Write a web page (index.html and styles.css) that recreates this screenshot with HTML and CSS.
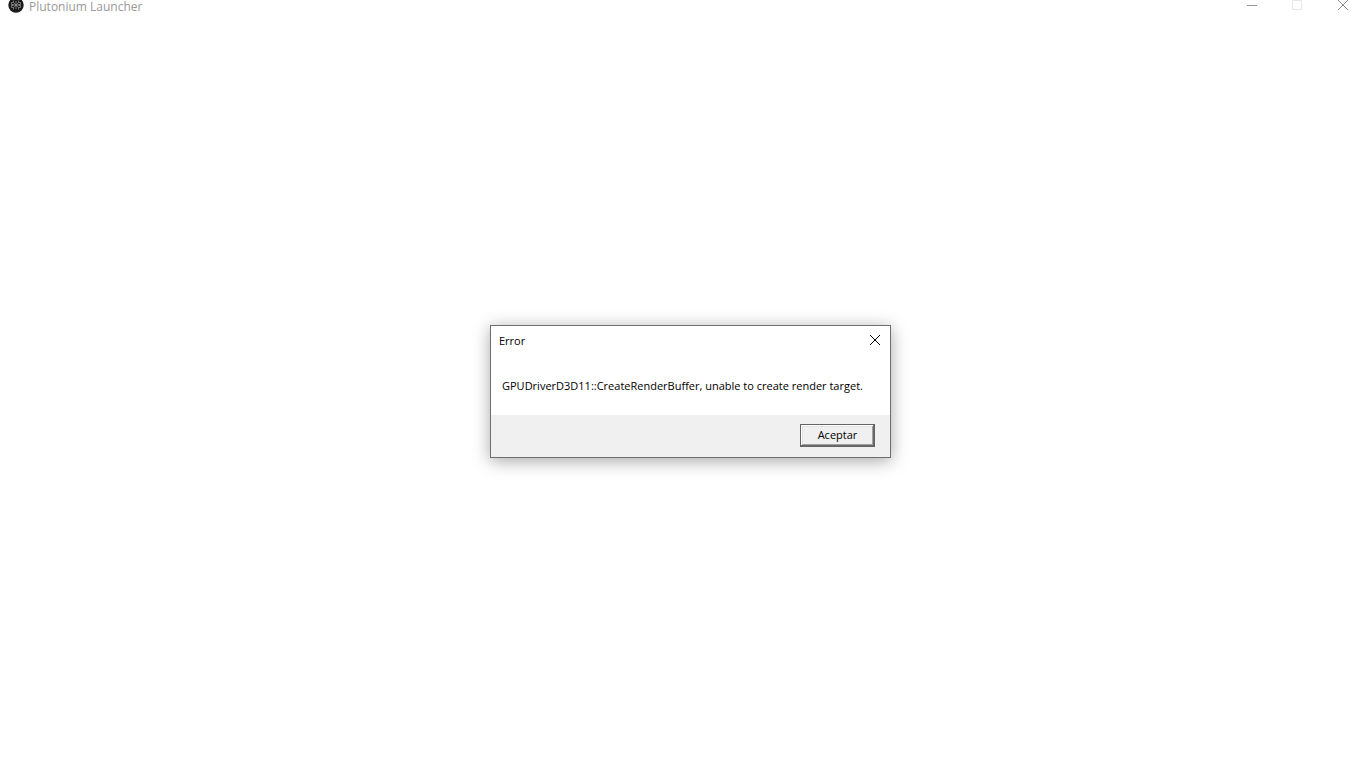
FILE: index.html
```html
<!DOCTYPE html>
<html lang="es">
<head>
    <meta charset="UTF-8">
    <meta name="viewport" content="width=device-width, initial-scale=1.0">
    <title>Plutonium Launcher</title>
    <link rel="stylesheet" href="styles.css">
</head>
<body>
    <header class="titlebar">
        <svg class="app-icon" width="16" height="16" viewBox="0 0 16 16">
            <circle cx="8" cy="8" r="7.7" fill="#1a1a1a"/>
            <g fill="none" stroke="#8c8c8c" stroke-width="0.8">
                <path d="M8 4v8M3.500 8h9"/>
                <path d="M5.5 3.5v2H3.500v2h2M10.5 3.5v2h2v2h-2M5.5 12.500v-2h-2v-2h2M10.5 12.500v-2h2v-2h-2"/>
                <path d="M5.5 5.5l5 5M10.5 5.5l-5 5"/>
            </g>
        </svg>
        <span class="app-title">Plutonium Launcher</span>
        <div class="window-controls">
            <button type="button" aria-label="Minimizar">
                <svg width="10" height="10" viewBox="0 0 10 10"><path d="M0 5.5h10" stroke="#999"/></svg>
            </button>
            <button type="button" aria-label="Maximizar" disabled>
                <svg width="10" height="10" viewBox="0 0 10 10"><path d="M.5 .5h9v9h-9z" fill="none" stroke="#e6e6e6"/></svg>
            </button>
            <button type="button" class="close" aria-label="Cerrar">
                <svg width="10" height="10" viewBox="0 0 10 10"><path d="M0 0l10 10M10 0L0 10" stroke="#8c8c8c"/></svg>
            </button>
        </div>
    </header>

    <main class="desktop">
        <section class="dialog" role="alertdialog" aria-labelledby="dialog-title" aria-describedby="dialog-text">
            <div class="dialog-header">
                <span id="dialog-title">Error</span>
                <button type="button" class="dialog-close" aria-label="Cerrar" onclick="closeDialog()">
                    <svg width="10" height="10" viewBox="0 0 10 10"><path d="M0 0l10 10M10 0L0 10" stroke="#000"/></svg>
                </button>
            </div>
            <p id="dialog-text" class="dialog-text">GPUDriverD3D11::CreateRenderBuffer, unable to create render target.</p>
            <div class="dialog-footer">
                <button type="button" class="accept" onclick="closeDialog()">Aceptar</button>
            </div>
        </section>
    </main>

    <script>
        function closeDialog() {
            document.querySelector(".dialog").hidden = true;
        }
    </script>
</body>
</html>
```
FILE: styles.css
```css
* {
    box-sizing: border-box;
}

body {
    margin: 0;
    min-height: 100vh;
    display: flex;
    flex-direction: column;
    background-color: #fff;
    color: #000;
    font-family: "Open Sans", "Noto Sans", sans-serif;
    font-size: 11px;
    line-height: 16px;
}

button {
    font: inherit;
    color: inherit;
    border: none;
    background: none;
    padding: 0;
}

/* Window title bar */
.titlebar {
    height: 10px;
    display: flex;
    align-items: center;
    padding-left: 8px;
}

.app-icon {
    flex: none;
}

.app-title {
    margin-left: 5px;
    padding-top: 3px;
    font-size: 12px;
    line-height: 12px;
    color: #999;
}

.window-controls {
    display: flex;
    margin-left: auto;
}

.window-controls button {
    width: 45px;
    height: 10px;
}

.window-controls .close {
    width: 47px;
}

button svg {
    display: block;
    margin: 0 auto;
}

/* Message box */
.desktop {
    flex: 1;
    display: flex;
    align-items: center;
    justify-content: center;
    padding: 5px 0 0 15px;
}

.dialog {
    width: 401px;
    border: 1px solid #6e6e6e;
    background-color: #fff;
    box-shadow: 0 3px 16px rgba(0, 0, 0, 0.35);
}

.dialog[hidden] {
    display: none;
}

.dialog-header {
    display: flex;
    align-items: flex-start;
    justify-content: space-between;
    padding-left: 8px;
}

#dialog-title {
    padding-top: 7px;
}

.dialog-close {
    width: 30px;
    height: 28px;
}

.dialog-text {
    margin: 0;
    padding: 24px 11px 21px;
}

.dialog-footer {
    display: flex;
    justify-content: flex-end;
    padding: 9px 15px 10px;
    background-color: #f0f0f0;
}

/* Classic raised button with the default-action frame */
.accept {
    width: 75px;
    height: 23px;
    padding-bottom: 1px;
    border: 1px solid #646464;
    background-color: #f0f0f0;
    box-shadow:
        inset -1px -1px #696969,
        inset 1px 1px #fff,
        inset -2px -2px #a0a0a0,
        inset 2px 2px #e3e3e3;
}
```
